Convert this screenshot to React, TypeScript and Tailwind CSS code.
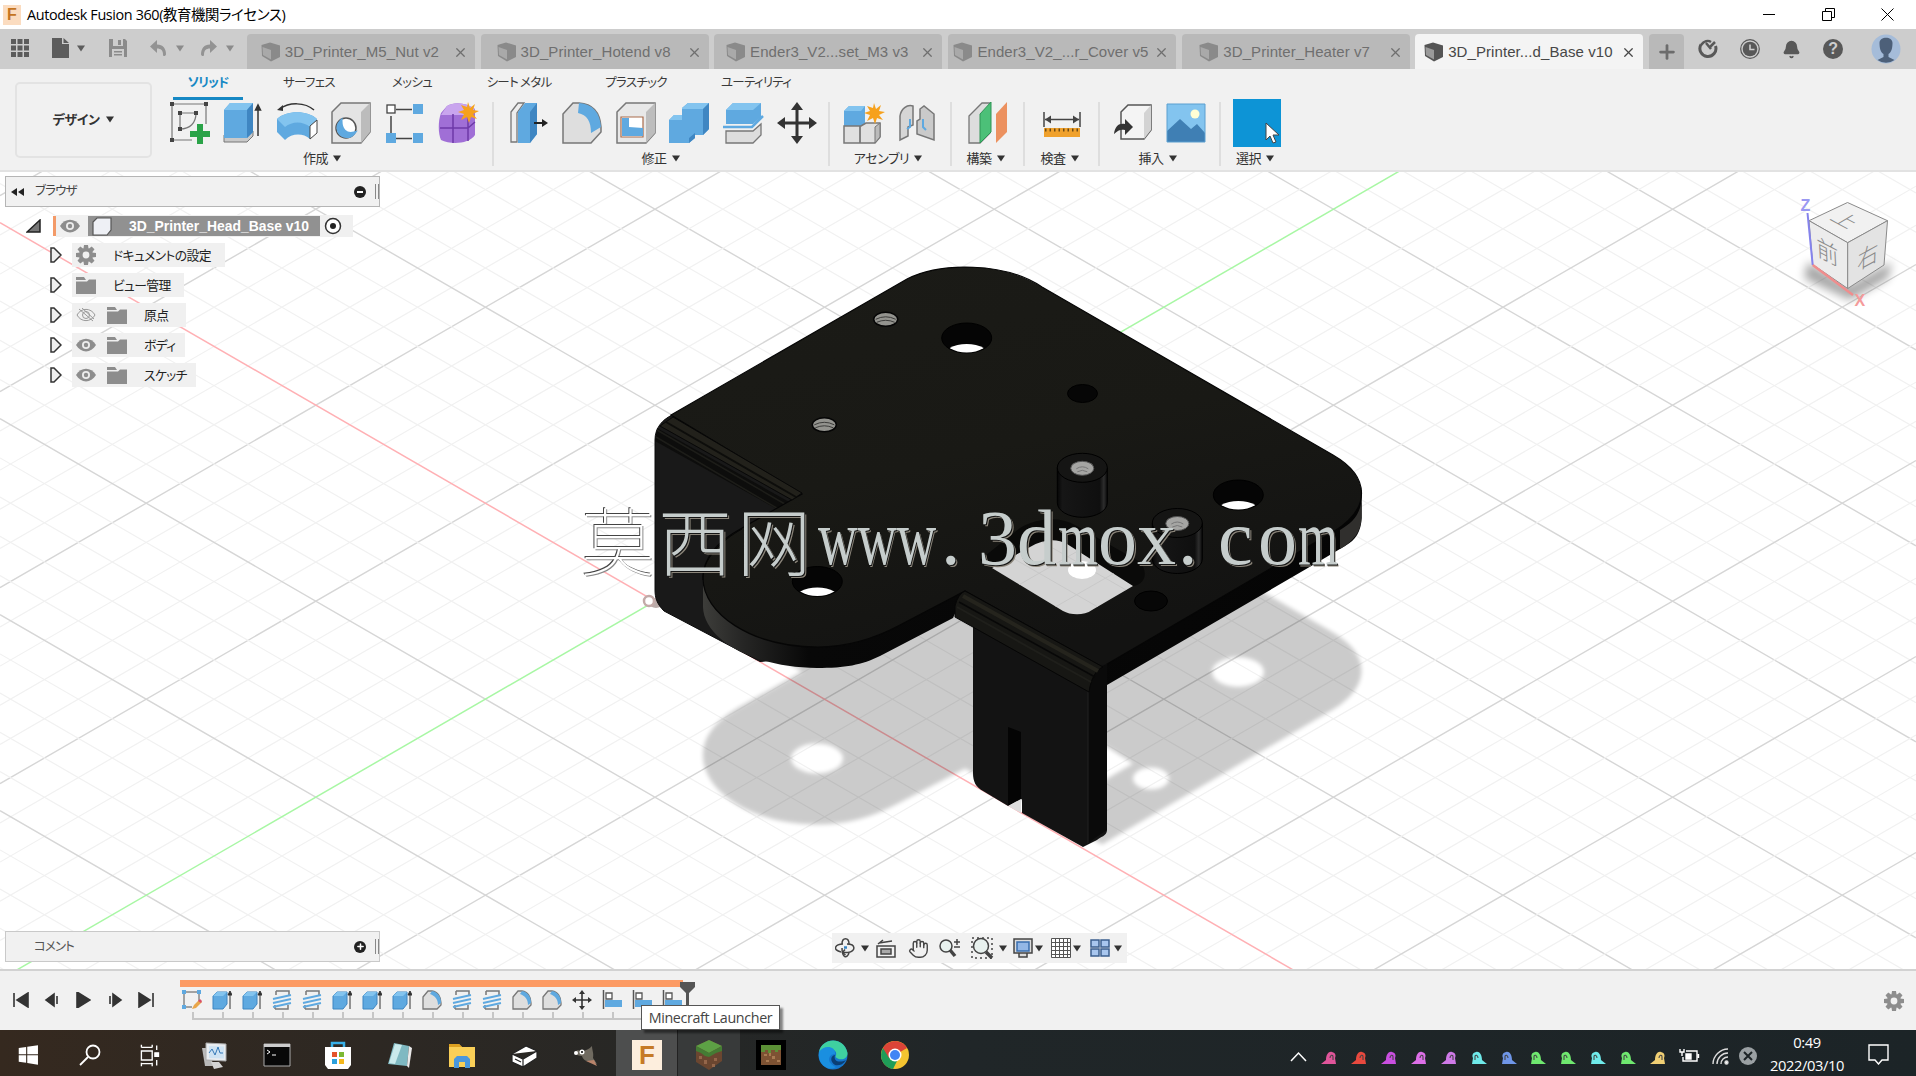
import type { ReactNode } from 'react';
import clsx from 'clsx';
import { Bell, Hand, X, Plus } from 'lucide-react';

const JP = "font-['Noto_Sans_CJK_JP',sans-serif] [font-feature-settings:'palt']";

function Caret({ className = 'text-[#333]' }: { className?: string }) {
  return (
    <svg width="8" height="7" viewBox="0 0 8 7" className={clsx('shrink-0', className)}>
      <path d="M0 0.5h8L4 6.5z" fill="currentColor" />
    </svg>
  );
}

function CubeIcon({ dim }: { dim?: boolean }) {
  return (
    <svg width="20" height="20" viewBox="0 0 20 20" className="shrink-0">
      <path d="M0.5 3 9 0.5 19 3.5V15L10 19.5 1 14z" fill={dim ? '#8a8a8a' : '#555'} />
      <path d="M1.5 5 10 8V17.5L2 13z" fill={dim ? '#a9a9a9' : '#9a9a9a'} />
    </svg>
  );
}

function Gear({ className }: { className?: string }) {
  return (
    <svg width="20" height="20" viewBox="0 0 20 20" className={clsx('shrink-0', className)}>
      <circle cx="10" cy="10" r="5.200" fill="none" stroke="#8d8d8d" strokeWidth="3.600" />
      {[0, 45, 90, 135, 180, 225, 270, 315].map((a) => (
        <path key={a} d="M8 0h4l.6 4H7.400z" fill="#8d8d8d" transform={`rotate(${a} 10 10)`} />
      ))}
    </svg>
  );
}

/* ---------- title bar ---------- */

function TitleBar() {
  return (
    <div className="h-[29px] shrink-0 flex items-center bg-white pl-[3px]">
      <div className="w-[18px] h-[20px] bg-[#fbdcc0] flex items-center justify-center text-[#c4741f] font-bold text-[16px] leading-none font-['Liberation_Sans',sans-serif]">
        F
      </div>
      <span className="ml-[6px] text-[14.4px] tracking-[-0.38px] text-black whitespace-nowrap font-['Open_Sans','Noto_Sans_CJK_JP',sans-serif] [font-feature-settings:'palt']">
        Autodesk Fusion 360(教育機関ライセンス)
      </span>
      <div className="ml-auto flex items-center gap-[46px] pr-[22px]">
        <svg width="13" height="13" viewBox="0 0 13 13"><path d="M0 6.5h12" stroke="#000" /></svg>
        <svg width="13" height="13" viewBox="0 0 13 13" fill="none" stroke="#000"><path d="M.5 3.5h9v9h-9zM3.5 3.500V.5h9v9h-3" /></svg>
        <svg width="13" height="13" viewBox="0 0 13 13" stroke="#000"><path d="M.5.5l12 12M12.500.5l-12 12" /></svg>
      </div>
    </div>
  );
}

/* ---------- document tabs ---------- */

const DOCS = [
  { name: '3D_Printer_M5_Nut v2' },
  { name: '3D_Printer_Hotend v8' },
  { name: 'Ender3_V2...set_M3 v3' },
  { name: 'Ender3_V2_...r_Cover v5' },
  { name: '3D_Printer_Heater v7' },
  { name: '3D_Printer...d_Base v10', active: true },
];

function TabBar() {
  return (
    <div className="h-[40px] shrink-0 flex bg-[#cdcdcd]">
      <div className="w-[247px] flex items-center pl-[11px] pb-[2px] text-[#5c5c5c]">
        <svg width="18" height="18" viewBox="0 0 18 18" fill="currentColor">
          {[0, 6.500, 13].map((x) => [0, 6.5, 13].map((y) => <rect key={`${x}-${y}`} x={x} y={y} width="5" height="5" />))}
        </svg>
        <svg width="17" height="20" viewBox="0 0 17 20" className="ml-[23px]"><path d="M0 0h10v6h7v14H0zM11.500 0 17 5h-5.500z" fill="currentColor" /></svg>
        <Caret className="ml-[8px] text-[#5c5c5c]" />
        <svg width="18" height="18" viewBox="0 0 18 18" className="ml-[24px] text-[#8b8b8b]">
          <path d="M0 0h16l2 2v16H0z" fill="currentColor" />
          <path d="M4 0h10v7H4zM3 10h12v8H3z" fill="#cdcdcd" />
          <path d="M9 1h3v5H9zM5 12h8v1.500H5zM5 15h8v1.500H5z" fill="currentColor" />
        </svg>
        <svg width="17" height="18" viewBox="0 0 17 18" className="ml-[23px] text-[#939393]"><path d="M7 1v4.500c6 0 9 4 9 10-1 2-3 2-3 0 0-4-2-6-6-6V14L0 7.500z" fill="currentColor" /></svg>
        <Caret className="ml-[9px] text-[#8b8b8b]" />
        <svg width="17" height="18" viewBox="0 0 17 18" className="ml-[16px] text-[#939393]"><path d="M10 1v4.500c-6 0-9 4-9 10 1 2 3 2 3 0 0-4 2-6 6-6V14l7-6.500z" fill="currentColor" /></svg>
        <Caret className="ml-[9px] text-[#8b8b8b]" />
      </div>
      <div className="flex gap-[5.700px] pt-[5px]">
        {DOCS.map((d) => (
          <div
            key={d.name}
            className={clsx(
              'w-[228px] flex items-center rounded-t-[4px] pr-[7px] pt-[1px]',
              d.active ? 'bg-[#f4f4f4] text-[#474747]' : 'bg-[#b9b9b9] text-[#6f6f6f]',
            )}
          >
            <div className="flex-1 flex items-center justify-center gap-[4px] whitespace-nowrap text-[15px] tracking-[0.08px] font-['Liberation_Sans',sans-serif]">
              <CubeIcon dim={!d.active} />
              <span>{d.name}</span>
            </div>
            <X size={15} strokeWidth={2} />
          </div>
        ))}
        <div className="w-[35px] flex items-center justify-center rounded-t-[4px] bg-[#b9b9b9] text-[#6c6c6c]">
          <Plus size={22} strokeWidth={3} />
        </div>
      </div>
      <div className="ml-auto w-[232px] flex items-center pl-[14px] text-[#585858]">
        <svg width="20" height="20" viewBox="0 0 20 20" fill="none" stroke="currentColor" strokeWidth="3">
          <path d="M3 5.500A8 8 0 1 0 17.500 7" /><path d="M3 6c3-4 7-5 10-3M8 4l5 6M11 9l6-6" strokeWidth="2.500" />
        </svg>
        <svg width="20" height="20" viewBox="0 0 20 20" className="ml-[22px]">
          <circle cx="10" cy="10" r="9.300" fill="none" stroke="currentColor" strokeWidth="1.200" />
          <circle cx="10" cy="10" r="7.300" fill="currentColor" />
          <path d="M10 5.500V10.500h4.500" stroke="#cdcdcd" strokeWidth="1.600" fill="none" />
        </svg>
        <Bell size={19} fill="currentColor" className="ml-[22px]" />
        <div className="ml-[22px] w-[20px] h-[20px] rounded-full bg-[#585858] text-[#cdcdcd] flex items-center justify-center text-[16px] font-bold font-['Liberation_Sans',sans-serif]">?</div>
        <svg width="30" height="30" viewBox="0 0 30 30" className="ml-[28px]">
          <circle cx="15" cy="15" r="14.500" fill="#a5bcd9" />
          <path d="M8.500 9c0-7 13-7 13 0 0 5-1 9-4 11v3l6 3a14.500 14.500 0 0 1-17 0l6-3v-3c-3-2-4-6-4-11z" fill="#4d6079" />
        </svg>
      </div>
    </div>
  );
}

/* ---------- ribbon icons (40x42) ---------- */

function Ico({ children }: { children: ReactNode }) {
  return <svg width="40" height="42" viewBox="0 0 40 42" className="shrink-0 overflow-visible">{children}</svg>;
}

const BLUE = '#5fa9e0';
const DBLUE = '#3f86c2';
const LBLUE = '#83c4ef';
const STAR = 'M10 0l2 6 5-4-2 6 6 1-6 3 4 5-6-2-2 6-2-6-6 3 3-6-6-2 6-2-3-5 6 2z';

const icons = {
  sketch: (
    <Ico>
      <g fill="none" stroke="#777" strokeWidth="1.200"><path d="M2 2h34v20M2 2v36h20" /><path d="M10 11h16c0 10-6 16-16 16z" /></g>
      <g fill="#444">{[[0, 0], [34, 0], [0, 36], [8, 9], [24, 9], [8, 25]].map(([x, y]) => <rect key={`${x}-${y}`} x={x} y={y} width="4" height="4" />)}</g>
      <path d="M27 22h6v7h7v6h-7v7h-6v-7h-7v-6h7z" fill="#2aa348" />
    </Ico>
  ),
  extrude: (
    <Ico>
      <path d="M1 33v7h23l6-6v-5z" fill="#c9c9c9" stroke="#777" />
      <path d="M1 8 7 1h23v29l-6 6H1z" fill={BLUE} /><path d="M1 8 7 1h23l-6 7z" fill={LBLUE} /><path d="M24 8l6-7v29l-6 6z" fill={DBLUE} />
      <path d="M35 34V4M32.500 8 35 3l2.500 5z" stroke="#333" strokeWidth="1.500" fill="#333" />
    </Ico>
  ),
  revolve: (
    <Ico>
      <path d="M3 7C12 0 28 0 37 8" fill="none" stroke="#333" strokeWidth="1.500" /><path d="M0 8l6-5v6z" fill="#333" />
      <path d="M0 17c9-9 31-9 40 0l-7 9v11c-7-6-18-6-25 1L0 30z" fill={BLUE} /><path d="M0 17c9-9 31-9 40 0l-7 8c-7-6-18-6-25 0z" fill={LBLUE} />
      <path d="M33 24l7-6v13l-7 6z" fill="#fff" stroke="#444" />
    </Ico>
  ),
  hole: (
    <Ico>
      <path d="M1 10 10 1h29v29l-9 11H1z" fill="#e4e4e4" stroke="#777" strokeWidth="1.500" /><path d="M30 10l9-9v29l-9 11z" fill="#bcbcbc" />
      <circle cx="15" cy="26" r="10" fill="#fff" stroke="#555" strokeWidth="1.500" /><path d="M10 19c0 9 5 14 13 12a9 9 0 0 1-15-1c-2-4-1-8 2-11z" fill={BLUE} stroke={BLUE} strokeWidth="3" />
    </Ico>
  ),
  pattern: (
    <Ico>
      <path d="M11 7.500h16M6 14v17M11 36.500h16" stroke="#444" strokeWidth="1.500" /><rect x="2" y="3" width="8" height="8" fill="#fff" stroke="#444" strokeWidth="1.300" />
      <g fill={BLUE}><rect x="28" y="2" width="10" height="10" /><rect x="1" y="31" width="10" height="10" /><rect x="28" y="31" width="10" height="10" /></g>
    </Ico>
  ),
  form: (
    <Ico>
      <path d="M9 4c8-5 20-3 28 3v26c-6 9-24 10-34 5-3-7-3-19 0-27z" fill="#a06fd6" /><path d="M9 4c8-5 20-3 28 3l-7 6H3z" fill="#c9a5ee" />
      <path d="M30 13v26M15 12v29M2 26h28l7-6" stroke="#6d3aa8" strokeWidth="1.500" fill="none" /><path d={STAR} fill="#f6a11c" transform="translate(20 0)" />
    </Ico>
  ),
  press: (
    <Ico>
      <path d="M3 10 10 1h6L9 11v29H3z" fill="#eee" stroke="#777" strokeWidth="1.300" />
      <path d="M10 10l7-9h12v31l-7 9H10z" fill={BLUE} /><path d="M22 10l7-9v31l-7 9z" fill={DBLUE} /><path d="M26 21h9" stroke="#222" strokeWidth="2" /><path d="M34 17l6 4-6 4z" fill="#222" />
    </Ico>
  ),
  fillet: (
    <Ico>
      <path d="M1 12 11 1h6c14 1 21 10 22 24v5L29 41H1z" fill="#dedede" stroke="#777" strokeWidth="1.500" />
      <path d="M17 1c14 1 21 10 22 24l-10 6c0-12-4-18-13-20z" fill={BLUE} />
    </Ico>
  ),
  shell: (
    <Ico>
      <path d="M1 10 10 1h29v30l-9 10H1z" fill="#e8e8e8" stroke="#777" strokeWidth="1.500" /><path d="M30 10l9-9v30l-9 10z" fill="#bdbdbd" />
      <path d="M5 15h22v20H5z" fill="#fff" stroke="#a86a4a" strokeWidth="1.200" /><path d="M6 16h7v9l14 1v8H6z" fill={BLUE} />
    </Ico>
  ),
  combine: (
    <Ico>
      <path d="M0 18l5-5h8V6l6-5h21v26l-6 6h-8v3l-6 5H0z" fill={BLUE} /><path d="M13 6l6-5h21l-6 6H13zM0 18l5-5h8v5z" fill={LBLUE} /><path d="M34 7l6-6v26l-6 6zM20 36l6-5v5l-6 5z" fill={DBLUE} />
    </Ico>
  ),
  split: (
    <Ico>
      <path d="M3 8l7-7h28v14l-8 7H3z" fill={BLUE} /><path d="M3 8l7-7h28l-8 7z" fill={LBLUE} /><path d="M0 25h29l11-11" fill="none" stroke={BLUE} strokeWidth="2.500" />
      <path d="M3 29h27l8-7v11l-8 8H3z" fill="#ddd" stroke="#777" strokeWidth="1.300" />
    </Ico>
  ),
  move: (
    <Ico><path d="M20 5v32M4 21h32" stroke="#333" strokeWidth="3" /><path d="M20 0l6 8H14zM20 42l-6-8h12zM0 21l8-6v12zM40 21l-8 6V15z" fill="#333" /></Ico>
  ),
  assembly: (
    <Ico>
      <path d="M1 9l5-5h16v20H1z" fill={BLUE} /><path d="M1 9l5-5h16l-4 5z" fill={LBLUE} />
      <path d="M1 24h16v17H1zM17 24h1l5-3h14v14l-5 6H17z" fill="#e0e0e0" stroke="#777" strokeWidth="1.500" /><path d="M17 24v17M32 25l5-4v14l-5 6z" fill="#bbb" stroke="#777" />
      <path d={STAR} fill="#f6a11c" transform="translate(21 1)" />
    </Ico>
  ),
  joint: (
    <Ico>
      <path d="M3 14C4 7 10 2 16 4v19l-5 2v9l-8 4z" fill="#d6d6d6" stroke="#777" strokeWidth="1.500" /><path d="M37 38V12L27 4l-4 3v10l-3 2v13z" fill="#cacaca" stroke="#777" strokeWidth="1.500" /><path d="M13 17v8l-3 2M26 17v8l3 3" stroke={BLUE} strokeWidth="2" fill="none" />
    </Ico>
  ),
  construct: (
    <Ico>
      <path d="M1 14 14 1h8v30L12 41H1z" fill="#ddd" stroke="#777" strokeWidth="1.300" /><path d="M12 12 23 0v30L12 41z" fill="#4cc078" stroke="#2f9455" /><path d="M28 12 39 0v30L28 41z" fill="#ec915f" />
    </Ico>
  ),
  measure: (
    <Ico><path d="M2 10v15M38 10v15M3 17.500h34" stroke="#444" strokeWidth="1.500" /><path d="M3 17.500l6-4v8zM37 17.500l-6-4v8z" fill="#444" /><path d="M2 26h36v9H2z" fill="#f0a12c" /><path d="M3 28h34" stroke="#6b4a14" strokeWidth="3" strokeDasharray="1.500 3" /></Ico>
  ),
  insert: (
    <Ico>
      <path d="M8 10l7-7h23v25l-7 9H8z" fill="#f4f4f4" stroke="#555" strokeWidth="1.500" /><path d="M31 11l7-8v25l-7 9z" fill="#d3d3d3" /><path d="M1 32c1-8 5-11 11-10v-5l8 8-8 8v-5c-4-1-7 0-11 4z" fill="#333" />
    </Ico>
  ),
  picture: (
    <Ico>
      <path d="M1 2h38v38H1z" fill={LBLUE} /><path d="M1 29 14 17l11 10 6-5 8 9v9H1z" fill="#3f7fb4" /><circle cx="29" cy="12" r="4.500" fill="#ffffd5" /><path d="M1 2h38v38H1z" fill="none" stroke="#5a9fd0" />
    </Ico>
  ),
  select: (
    <div className="w-[48px] h-[48px] bg-[#0d94d6] -my-[3px] flex items-end justify-end pb-[3px]">
      <svg width="16" height="22" viewBox="0 0 16 22"><path d="M1 1v17l4-4 3 7 3-1-3-7h6z" fill="#fff" stroke="#444" /></svg>
    </div>
  ),
};

type Group = { label: string; width: string; icons: (keyof typeof icons)[] };

const GROUPS: Group[] = [
  { label: '作成', width: 'w-[328px] pr-[10px]', icons: ['sketch', 'extrude', 'revolve', 'hole', 'pattern', 'form'] },
  { label: '修正', width: 'w-[336px] pl-[3px]', icons: ['press', 'fillet', 'shell', 'combine', 'split', 'move'] },
  { label: 'アセンブリ', width: 'w-[122px]', icons: ['assembly', 'joint'] },
  { label: '構築', width: 'w-[73px]', icons: ['construct'] },
  { label: '検査', width: 'w-[75px]', icons: ['measure'] },
  { label: '挿入', width: 'w-[121px]', icons: ['insert', 'picture'] },
  { label: '選択', width: 'w-[72px]', icons: ['select'] },
];

const RIBBON_TABS = [
  { label: 'ソリッド', cls: 'w-[70px]' },
  { label: 'サーフェス', cls: 'w-[60px] ml-[36px]' },
  { label: 'メッシュ', cls: 'w-[50px] ml-[48px]' },
  { label: 'シート メタル', cls: 'w-[80px] ml-[42px]' },
  { label: 'プラスチック', cls: 'w-[70px] ml-[42px]' },
  { label: 'ユーティリティ', cls: 'w-[80px] ml-[45px]' },
];

function Ribbon() {
  return (
    <div className="h-[103px] shrink-0 flex bg-[#f1f1f1] border-b-2 border-[#e2e2e2]">
      <div className={clsx('ml-[15px] mt-[13px] w-[137px] h-[76px] rounded-[5px] border-2 border-[#e3e3e3] flex items-center justify-center gap-[7px] pb-[2px] text-[13px] font-bold text-[#333] tracking-[-0.5px]', JP)}>
        デザイン <Caret />
      </div>
      <div className="ml-[14px] flex flex-col">
        <div className="flex h-[31px] pl-[7px]">
          {RIBBON_TABS.map((t, i) => (
            <div
              key={t.label}
              className={clsx(
                'flex justify-center pt-[3px] text-[12.500px] leading-[19px] whitespace-nowrap tracking-[-0.7px] border-b-[3px]',
                JP,
                t.cls,
                i === 0 ? 'font-bold text-[#1688c4] border-[#1688c4]' : 'text-[#3a3a3a] border-transparent',
              )}
            >
              {t.label}
            </div>
          ))}
        </div>
        <div className="flex pt-[2px]">
          {GROUPS.map((g, i) => (
            <div key={g.label} className={clsx('h-[64px] flex flex-col items-center', g.width, i < 6 && 'border-r-2 border-[#dedede]')}>
              <div className="flex gap-[13.700px]">
                {g.icons.map((n) => <div key={n}>{icons[n]}</div>)}
              </div>
              <div className={clsx('mt-[4px] -ml-[4px] flex items-center gap-[5px] text-[13px] leading-[20px] text-[#333] tracking-[-0.4px] whitespace-nowrap', JP)}>
                {g.label} <Caret />
              </div>
            </div>
          ))}
        </div>
      </div>
    </div>
  );
}

/* ---------- viewport ---------- */

const OX = 655;
const OY = 601.2;
const SLOPE = 98 / 169.6;

function Grid() {
  const lines: ReactNode[] = [];
  for (let k = -32; k <= 32; k++) {
    if (k === 0) continue;
    const major = k % 5 === 0;
    const c = OY + k * 39.2;
    const stroke = major ? '#d6d6d6' : '#f1f1f1';
    lines.push(<path key={k} d={`M0 ${c - SLOPE * OX}L1916 ${c + SLOPE * (1916 - OX)}M0 ${c + SLOPE * OX}L1916 ${c - SLOPE * (1916 - OX)}`} stroke={stroke} strokeWidth={major ? 1.4 : 1.2} />);
  }
  return (
    <g>
      {lines}
      <path d={`M0 ${OY - SLOPE * OX}L1916 ${OY + SLOPE * (1916 - OX)}`} stroke="#ffb0b4" strokeWidth="1.500" />
      <path d={`M0 ${OY + SLOPE * OX}L1916 ${OY - SLOPE * (1916 - OX)}`} stroke="#a8f7a4" strokeWidth="1.500" />
    </g>
  );
}

const PLATE = 'M671 415L907 279C940 262 1005 262 1042 287L1333 455C1371 477 1371 509 1333 532L1102 667L965 591L900 625C870 641 845 647 818 647C750 647 703 613 703 578C703 556 720 540 742 528L802 494Z';
const WINDOW = 'M992 568L1030 547C1043 539 1057 538 1067 544L1133 586L1092 610C1084 616 1070 615 1063 611Z';

const ell = (x: number, y: number, rx: number, ry: number) => `M${x - rx} ${y}a${rx} ${ry} 0 1 0 ${rx * 2} 0a${rx} ${ry} 0 1 0 ${-rx * 2} 0Z`;

function ThroughHole({ x, y }: { x: number; y: number }) {
  const id = `hole-${x}`;
  return (
    <g>
      <clipPath id={id}><ellipse cx={x} cy={y} rx="23.500" ry="14.500" /></clipPath>
      <ellipse cx={x} cy={y} rx="25" ry="15" fill="#050505" stroke="#000" />
      <ellipse cx={x} cy={y + 20} rx="24" ry="14" fill="#fff" clipPath={`url(#${id})`} />
    </g>
  );
}

function Thread({ x, y }: { x: number; y: number }) {
  return (
    <g>
      <ellipse cx={x} cy={y} rx="12" ry="7" fill="#93938e" stroke="#050505" strokeWidth="1.500" />
      <path d={`M${x - 10} ${y}q10 -5 20 0M${x - 9} ${y + 3}q9 -4 18 0`} stroke="#3c3c3a" fill="none" />
    </g>
  );
}

function Post({ x, y, h }: { x: number; y: number; h: number }) {
  return (
    <g>
      <path d={`M${x - 25} ${y}v${h}a25 14.500 0 0 0 50 0v${-h}z`} fill="url(#post)" stroke="#000" />
      <ellipse cx={x} cy={y} rx="25" ry="14.500" fill="#151514" stroke="#000" />
      <ellipse cx={x} cy={y + 0.500} rx="11.500" ry="7" fill="#a5a5a3" stroke="#555" />
      <path d={`M${x - 6} ${y + 1}q6 -4 12 0M${x - 5} ${y + 4}q5 -3 10 0`} stroke="#777" fill="none" />
    </g>
  );
}

function Bracket() {
  return (
    <g>
      <defs>
        <filter id="soft" x="-5%" y="-5%" width="110%" height="110%"><feGaussianBlur stdDeviation="2.200" /></filter>
        <filter id="softer" x="-30%" y="-30%" width="160%" height="160%"><feGaussianBlur stdDeviation="5" /></filter>
        <linearGradient id="top" x1="0" y1="0" x2="0.4" y2="1"><stop offset="0" stopColor="#1b1b17" /><stop offset="0.55" stopColor="#191915" /><stop offset="1" stopColor="#131312" /></linearGradient>
        <linearGradient id="post"><stop offset="0" stopColor="#060606" /><stop offset="0.1" stopColor="#161616" /><stop offset="0.85" stopColor="#0f0f0f" /><stop offset="0.93" stopColor="#2d2d2d" /><stop offset="1" stopColor="#0a0a0a" /></linearGradient>
        <linearGradient id="rim"><stop offset="0" stopColor="#3d3d3a" /><stop offset="0.06" stopColor="#262625" /><stop offset="0.16" stopColor="#080808" /><stop offset="1" stopColor="#050505" /></linearGradient>
      </defs>

      {/* ground shadow */}
      <g transform="translate(0 177.500)" filter="url(#soft)" opacity="0.2">
        <path fillRule="evenodd" d={`${PLATE}${WINDOW}${ell(817, 581, 26, 15)}${ell(1238, 494.5, 26, 15)}${ell(1151, 601, 18, 11)}${ell(1082, 393, 16, 11)}`} fill="#000" />
      </g>

      {/* origin marker */}
      <ellipse cx="656" cy="603" rx="7" ry="5" fill="#b9aaa8" />
      <circle cx="649" cy="601" r="5" fill="#fff" stroke="#c3aaa8" strokeWidth="2.500" />

      {/* left flange */}
      <path d="M655 440C655 428 662 420 672 415L830 500V655L760 661.500L664 611C657 604 655 598 655 590Z" fill="#191919" stroke="#0a0a0a" />
      <path d="M657 428L800 508L784 513L655 441z" fill="#0d0d0c" />
      <path d="M657 430L790 507M656 437L780 510" stroke="#1d1d19" strokeWidth="1.500" />

      {/* thickness of the plate */}
      <path d="M703 578V607C704 640 755 668 817 668C845 668 862 665 880 656L953 618L965 591L1102 667L1107 685L1313 565L1345 546C1356 540 1361 531 1361.700 518V490Z" fill="url(#rim)" />
      <path d="M1361.500 500C1360 515 1352 523 1340 530V549C1354 541 1361 531 1361.500 518z" fill="#302f2d" />

      {/* top face */}
      <path fillRule="evenodd" d={PLATE} fill="url(#top)" stroke="#060606" strokeWidth="1.200" />
      <path d="M673 417L802 493L792 500L660 426z" fill="#22211b" stroke="#080808" />
      <path d="M666 422L796 497" stroke="#0d0d0b" strokeWidth="2" />
      <path d="M703 580C701 560 722 540 742 529" fill="none" stroke="#050505" />

      {/* window */}
      <path d="M980 560L1020 528C1040 517 1060 517 1075 525L1140 562C1148 572 1146 584 1133 586L992 568Z" fill="#0a0a09" />
      <path d={WINDOW} fill="#d4d4d4" />
      <clipPath id="win"><path d={WINDOW} /></clipPath>
      <g clipPath="url(#win)">
        <path d="M990 545L1110 614M1030 535L1140 598M1010 590L1090 544M1050 610L1130 564" stroke="#c8c8c8" />
        <ellipse cx="1082" cy="570" rx="14" ry="9" fill="#fff" />
      </g>

      {/* front leg */}
      <path d="M973 620L1095 665L1107 664V830C1107 836 1100 837 1097 840L1083 847L1022 813V799L1008 806L983 791C976 787 973 782 973 773Z" fill="#131313" />
      <path d="M1088 690L1096 668L1107 664V830L1095 838L1088 844z" fill="#0a0a0a" />
      <path d="M1088 690V843" stroke="#222" />
      <path d="M1008 727L1021 732V799L1008 806z" fill="#040404" />
      <path d="M1008 806L1021 799V813z" fill="#ddd" />
      <path d="M965 591L1103 667C1096 670 1091 678 1089 692L955 617L955 606Q958 594 965 591Z" fill="#171714" stroke="#060606" />
      <path d="M963 596L1098 671" stroke="#25241d" strokeWidth="4" />
      <path d="M957 607L1091 682" stroke="#1f1f1b" strokeWidth="2" />
      <path d="M959 602L1095 677" stroke="#080808" strokeWidth="1.500" />

      <ThroughHole x={966.700} y={338} />
      <ThroughHole x={817.300} y={581.500} />
      <ThroughHole x={1238.300} y={495} />
      <ellipse cx="1082.500" cy="393.500" rx="15" ry="9" fill="#060606" stroke="#000" />
      <ellipse cx="1151" cy="601" rx="16.500" ry="10" fill="#070707" stroke="#000" />
      <Thread x={885.700} y={319.300} />
      <Thread x={824.300} y={424.800} />
      <Post x={1082.300} y={467.800} h={35} />
      <Post x={1177.300} y={523} h={36} />
    </g>
  );
}

function ViewCube() {
  return (
    <g fontFamily="'Noto Sans CJK JP', sans-serif">
      <path d="M1808 262L1848 286L1892 262L1888 278L1850 300L1804 278z" fill="#000" opacity="0.35" filter="url(#softer)" />
      <g stroke="#8a8a8a" strokeWidth="1">
        <path d="M1847.500 202.500L1887.500 220.700L1847.700 242.700L1809 220.700z" fill="#f1f1f1" />
        <path d="M1809 220.700L1847.700 242.700V288.500L1812.700 264.500z" fill="#ececec" />
        <path d="M1887.500 220.700L1847.700 242.700V288.500L1884 265z" fill="#e3e3e3" />
      </g>
      <path d="M1807.500 213L1812.700 265" stroke="#8583ec" strokeWidth="2" />
      <path d="M1812.700 265L1853 295" stroke="#f08d8d" strokeWidth="2.500" />
      <g fill="#8b8b8b" fontWeight="300">
        <text transform="matrix(.78 .42 -.72 .42 1844 217)" x="-8" y="12" fontSize="25">上</text>
        <text transform="matrix(.88 .46 .05 .96 1817 255)" fontSize="25">前</text>
        <text transform="matrix(.84 -.46 -.04 .96 1857 271)" fontSize="25">右</text>
      </g>
      <g fontFamily="'Liberation Sans', sans-serif" fontWeight="bold" fontSize="16">
        <text x="1800.500" y="211" fill="#9a98f2">Z</text>
        <text x="1854.500" y="306" fill="#f59a9a">X</text>
      </g>
    </g>
  );
}

function Watermark() {
  return (
    <div className="absolute left-[581px] top-[316px] h-[100px] flex items-center text-[#c6cdcc] text-[78px] leading-[100px] whitespace-nowrap [text-shadow:1px_1px_0_#151515,2px_2px_0_#8b857a]">
      <span className="w-[77px] text-[74px] text-white font-thin font-['Noto_Sans_CJK_SC',sans-serif] [text-shadow:-1px_-1px_0_#444,1px_1px_0_#888]">莫</span>
      <span className="w-[160px] text-[74px] font-light tracking-[5px] font-['Noto_Sans_CJK_SC',sans-serif]">西网</span>
      <div className="flex font-['Liberation_Serif',serif]">
        <span className="w-[120px]"><span className="inline-block origin-left scale-x-[.7]">www</span></span>
        <span className="w-[40px] pl-[3px]">.</span>
        <span className="w-[80px]">3d</span>
        <span className="w-[40px]"><span className="inline-block origin-left scale-x-[.66]">m</span></span>
        <span className="w-[80px]">ox</span>
        <span className="w-[40px]">.</span>
        <span className="w-[40px]">c</span>
        <span className="w-[40px]">o</span>
        <span className="w-[40px]"><span className="inline-block origin-left scale-x-[.66]">m</span></span>
      </div>
    </div>
  );
}

function Folder() {
  return <svg width="20" height="17" viewBox="0 0 20 17"><path d="M0 0h8l2 3H0zM0 4.500h11l2-2h7V17H0z" fill="#8d8d8d" /></svg>;
}

function Expander() {
  return <svg width="12" height="16" viewBox="0 0 12 16"><path d="M1 1l3 0 7 7-7 7H1z" fill="#eee" stroke="#333" strokeWidth="1.500" /></svg>;
}

function EyeGlyph({ hidden }: { hidden?: boolean }) {
  if (hidden) {
    return (
      <svg width="20" height="14" viewBox="0 0 20 14" fill="none" stroke="#999">
        <path d="M1 7C5-.5 15-.5 19 7 15 14.500 5 14.500 1 7z" /><circle cx="10" cy="7" r="3.500" /><path d="M3 1l14 12M6 0l12 11" />
      </svg>
    );
  }
  return <svg width="20" height="14" viewBox="0 0 20 14"><path d="M0 7C5-1.500 15-1.500 20 7 15 15.500 5 15.500 0 7z" fill="#8d8d8d" /><circle cx="10" cy="7" r="4" fill="#ececec" /><circle cx="10" cy="7" r="2.200" fill="#8d8d8d" /></svg>;
}

const TREE = [
  { label: 'ドキュメントの設定', icon: 'gear', width: 'w-[153px]' },
  { label: 'ビュー管理', icon: 'folder', width: 'w-[112px]' },
  { label: '原点', icon: 'hidden', width: 'w-[114px]' },
  { label: 'ボディ', icon: 'eye', width: 'w-[113px]' },
  { label: 'スケッチ', icon: 'eye', width: 'w-[124px]' },
];

function BrowserPanel() {
  return (
    <div className="absolute left-[5px] top-[4px] w-[375px]">
      <div className="h-[31px] flex items-center border border-[#b5b5b5] bg-[#f1f1f1] pl-[5px]">
        <svg width="13" height="8" viewBox="0 0 13 8"><path d="M6 0v8L0 4zM13 0v8L7 4z" fill="#222" /></svg>
        <span className={clsx('ml-[11px] -mt-[2px] text-[12.500px] text-[#444] tracking-[-0.8px]', JP)}>ブラウザ</span>
        <div className="ml-auto mr-[9px] w-[12px] h-[12px] rounded-full bg-[#222] flex items-center justify-center"><div className="w-[6px] h-[2px] bg-white" /></div>
        <div className="w-[4px] h-[15px] border-l border-r border-[#888]" />
      </div>
      <div className="mt-[9px] h-[20px] flex items-center">
        <svg width="15" height="14" viewBox="0 0 15 14" className="ml-[21px]"><path d="M14 1v12H1z" fill="#777" stroke="#222" strokeWidth="1.500" /></svg>
        <div className="ml-[12px] w-[3px] h-full bg-[#f39a68]" />
        <div className="h-[22px] w-[297px] bg-[#f0f0f0] flex items-center pl-[4px]">
          <EyeGlyph />
          <div className="ml-[8px] h-[20px] w-[232px] bg-[#919191] flex items-center pl-[4px]">
            <svg width="20" height="19" viewBox="0 0 20 19"><path d="M1 5l4-4h14v12l-4 5H1z" fill="#eef0f5" stroke="#555" strokeWidth="1.200" /></svg>
            <span className="ml-[17px] text-[13.900px] font-bold text-white whitespace-nowrap font-['Liberation_Sans',sans-serif]">3D_Printer_Head_Base v10</span>
          </div>
          <svg width="18" height="18" viewBox="0 0 18 18" className="ml-[4px]"><circle cx="9" cy="9" r="7.500" fill="#fff" stroke="#333" strokeWidth="1.500" /><circle cx="9" cy="9" r="3" fill="#222" /></svg>
        </div>
      </div>
      <div className="mt-[7px] flex flex-col gap-[6px] pl-[45px]">
        {TREE.map((n) => (
          <div key={n.label} className="h-[24px] flex items-center gap-[10px]">
            <Expander />
            <div className={clsx('h-full flex items-center bg-[#f0f0f0] pl-[4px]', n.width)}>
              {n.icon === 'gear' && <Gear />}
              {n.icon === 'hidden' && <EyeGlyph hidden />}
              {n.icon === 'eye' && <EyeGlyph />}
              {n.icon !== 'gear' && <div className={n.icon === 'folder' ? '' : 'ml-[11px]'}><Folder /></div>}
              <span className={clsx('ml-[17px] text-[12.800px] text-[#222] tracking-[-0.6px] whitespace-nowrap', JP)}>{n.label}</span>
            </div>
          </div>
        ))}
      </div>
    </div>
  );
}

function NavBar() {
  const s = { fill: 'none', stroke: '#444', strokeWidth: 1.5 };
  return (
    <div className="absolute left-[832px] top-[761px] w-[295px] h-[30px] bg-[#f1f1f1] flex items-center pl-[3px]">
      <svg width="20" height="20" viewBox="0 0 20 20" {...s}><path d="M6 14C-3 12 0 6 8 6M12 6c9 0 9 7 1 8.500l-5 0" /><path d="M7 6c0-7 7-7 7 0M7 10c0 10 5 11 7 5" /><path d="M10 11.500L7.500 14.500l3 2.500" /><path d="M9 9.500h3" stroke="#3784c4" strokeWidth="2.500" /></svg>
      <Caret className="ml-[6px] text-[#333]" />
      <svg width="20" height="20" viewBox="0 0 20 20" className="ml-[7px]" {...s}><path d="M1 8h18v11H1z" /><path d="M5 11h10v5H5z" fill="#aaa" /><path d="M2 6l5-4M3 5l13-2" /></svg>
      <Hand size={21} strokeWidth={1.600} className="ml-[12px] text-[#444]" />
      <svg width="21" height="20" viewBox="0 0 21 20" className="ml-[10px]" {...s}><circle cx="7" cy="8" r="6" fill="#e8f1ee" /><path d="M11 12l5 6" strokeWidth="3.500" /><path d="M15 4h6M18 1v6M15 9h6" /></svg>
      <svg width="23" height="22" viewBox="0 0 23 22" className="ml-[11px]" {...s}><path d="M1 1h20v20H1z" strokeDasharray="2 3" /><circle cx="10" cy="9" r="7.500" fill="#e8f1ee" /><path d="M15 15l6 6" strokeWidth="3.500" /></svg>
      <Caret className="ml-[5px] text-[#333]" />
      <svg width="20" height="20" viewBox="0 0 20 20" className="ml-[6px]" {...s}><path d="M1 1h18v14H1zM6 15h8v4H6z" fill="#ddd" /><path d="M4 4h12v9H4z" fill="#93b7e6" stroke="#3a6fb0" /></svg>
      <Caret className="ml-[2px] text-[#333]" />
      <svg width="20" height="20" viewBox="0 0 20 20" className="ml-[8px]" stroke="#555" fill="#fff"><path d="M.5.5h19v19H.5zM4.500 0v20M8.500 0v20M12.500 0v20M16.500 0v20M0 4.500h20M0 8.500h20M0 12.500h20M0 16.500h20" /></svg>
      <Caret className="ml-[2px] text-[#333]" />
      <svg width="20" height="18" viewBox="0 0 20 18" className="ml-[9px]" stroke="#3b5f8f" fill="#a8c6ee" strokeWidth="1.500"><path d="M1 1h8v7H1zM11 1h8v7h-8zM1 10h8v7H1zM11 10h8v7h-8z" /></svg>
      <Caret className="ml-[4px] text-[#333]" />
    </div>
  );
}

function Viewport() {
  return (
    <div className="relative h-[797px] shrink-0 overflow-hidden bg-white">
      <svg width="1916" height="797" viewBox="0 172 1916 797" className="block">
        <Grid />
        <Bracket />
        <ViewCube />
      </svg>
      <Watermark />
      <BrowserPanel />
      <div className="absolute left-[5px] top-[759px] w-[375px] h-[31px] flex items-center border border-[#c9c9c9] bg-[#f1f1f1] pl-[28px]">
        <span className={clsx('-mt-[1px] text-[12.500px] text-[#555] tracking-[-0.9px]', JP)}>コメント</span>
        <div className="ml-auto mr-[9px] w-[12px] h-[12px] rounded-full bg-[#222] flex items-center justify-center text-white"><Plus size={9} strokeWidth={4} /></div>
        <div className="w-[4px] h-[15px] border-l border-r border-[#888]" />
      </div>
      <NavBar />
    </div>
  );
}

/* ---------- timeline ---------- */

const T = {
  s: <><path d="M2 2h15v11M2 2v15h8" fill="none" stroke="#555" /><path d="M0 0h4v4H0zM15 0h4v4h-4zM0 15h4v4H0z" fill={BLUE} /><path d="M10 19l2-4 5-5 3 2-6 6z" fill="#e9a64a" /><path d="M16 11l2-2 2 2-1 2z" fill="#d8506a" /></>,
  e: <><path d="M1 6l4-4h10v12l-4 5H1z" fill={BLUE} stroke={DBLUE} /><path d="M1 6l4-4h10l-4 4z" fill={LBLUE} /><path d="M18 19V3M16 5l2-4 2 4z" stroke="#333" fill="#333" /></>,
  h: <><path d="M4 1h13v4M3 19h13v-4M4 1v4M3 19v-4" fill="none" stroke="#777" strokeWidth="1.500" /><path d="M1 9l18-4M1 13l18-4M1 17l18-4" stroke={BLUE} strokeWidth="2" /></>,
  f: <><path d="M1 7l5-6h4c6 1 9 6 9 12v2l-4 4H1z" fill="#dedede" stroke="#777" strokeWidth="1.300" /><path d="M10 1c6 1 9 6 9 12l-3 2c0-6-3-9-8-11z" fill={BLUE} /></>,
  m: <><path d="M10 3v14M3 10h14" stroke="#333" strokeWidth="1.600" /><path d="M10 0l3 4H7zM10 20l-3-4h6zM0 10l4-3v6zM20 10l-4 3V7z" fill="#333" /></>,
  a: <><path d="M1.500 0v19" stroke="#555" strokeWidth="1.500" /><path d="M4 3h6v6H4z" fill="#fff" stroke="#555" strokeWidth="1.300" /><path d="M3 10h17v7H3z" fill={BLUE} /></>,
};

const STEPS = 'seehheeefhhffmaaa'.split('') as (keyof typeof T)[];

function Timeline() {
  return (
    <div className="relative h-[61px] shrink-0 flex bg-[#f1f1f1] border-t-2 border-[#d2d2d2]">
      <div className="w-[180px] flex items-center gap-[15.200px] pl-[13px] pb-[1px] text-[#333]">
        {['M1 1v14M15 1v14L4 8z', 'M10 2v12L2 8zM13 4v8', 'M2 0v16l13-8z', 'M6 2v12l8-6zM3 4v8', 'M15 1v14M1 1v14l11-7z'].map((d) => (
          <svg key={d} width="16" height="16" viewBox="0 0 16 16"><path d={d} fill="currentColor" stroke="currentColor" strokeWidth="1.600" /></svg>
        ))}
      </div>
      <div className="pt-[9px] w-[512px]">
        <div className="h-[7px] w-[503px] bg-[#fc9a63]" />
        <div className="flex gap-[10px] pl-[2px] pt-[3px]">
          {STEPS.map((s, i) => <svg key={i} width="20" height="20" viewBox="0 0 20 20" className="shrink-0">{T[s]}</svg>)}
        </div>
        <div className="ml-[12px] mt-[2px] h-[8px] w-[482px] flex border-b-2 border-[#c6c6c6]">
          {STEPS.map((_, i) => <div key={i} className="w-[30px] shrink-0 border-l-2 border-[#c6c6c6]" />)}
        </div>
      </div>
      <svg width="17" height="34" viewBox="0 0 17 34" className="absolute left-[679px] top-[11px]"><path d="M1 0h15v5l-6 6v23H7V11L1 5z" fill="#555" /></svg>
      <Gear className="ml-auto mr-[12px] mt-[20px]" />
      <div className="absolute z-10 left-[641px] top-[34px] w-[139px] h-[25px] border border-[#555] bg-white flex items-center justify-center text-[14.300px] tracking-[-0.35px] text-[#444] whitespace-nowrap shadow-[3px_3px_2px_rgba(0,0,0,0.45)] font-['Open_Sans',sans-serif]">
        Minecraft Launcher
      </div>
    </div>
  );
}

/* ---------- taskbar ---------- */

const APPS: ReactNode[] = [
  <path d="M1 5l10-1.500V14H1zM12.500 3.300 27 1v13H12.500zM1 15.500h10V26L1 24.500zM12.500 15.500H27V29l-14.500-2.500z" fill="#fff" transform="translate(3 4.500) scale(.74 .7)" />,
  <g fill="none" stroke="#fff" strokeWidth="1.800"><circle cx="16" cy="12" r="6.500" /><path d="M11 17l-8 8" /></g>,
  <g fill="none" stroke="#fff" strokeWidth="1.500" transform="translate(-3 2) scale(.9)"><path d="M6 10h12v10H6zM6 6V3M18 6V3M6 23v4M18 23v4M6 6h12M6 24h12M23 4v5M23 20v6" /><path d="M21 12h4v4h-4z" fill="#fff" /></g>,
  <g><path d="M1 8h8l3 18H4z" fill="#b9b9b9" /><path d="M5 3l20 1v17l-20-1z" fill="#e9edf1" stroke="#aaa" /><path d="M8 6l15 .5v12L8 18z" fill="#cfe3f3" /><path d="M8 13l3-4 3 6 3-8 2 6h3" stroke="#3579b8" fill="none" /><path d="M10 22l8 0 4 5-9 2z" fill="#d4d4d4" /></g>,
  <g><path d="M1 4h26v22H1z" fill="#080808" stroke="#aaa" /><path d="M1 4h26v3H1z" fill="#ccc" /><path d="M4 10l3 2-3 2M9 15h4" stroke="#fff" fill="none" /></g>,
  <g><path d="M8 7V3h12v4" stroke="#38b0e8" strokeWidth="2.500" fill="none" /><path d="M1 7h26v18l-3 4H4l-3-4z" fill="#fff" /><path d="M8 12h5v5H8z" fill="#e5532b" /><path d="M15 12h5v5h-5z" fill="#7db933" /><path d="M8 19h5v5H8z" fill="#2ba0dc" /><path d="M15 19h5v5h-5z" fill="#f5b81c" /></g>,
  <g><path d="M8 3l15 3-2 20L2 24z" fill="#7fb9c2" /><path d="M9 4l7 1-7 19-6-1z" fill="#c9eaec" /><path d="M23 6l3 2-3 20-2-2z" fill="#e9e9e9" /></g>,
  <g><path d="M1 4h10l3 3h13v20H1z" fill="#f9cf57" /><path d="M1 4h10l3 3H1z" fill="#dca021" /><path d="M6 28v-9l3-3h10l3 3v9h-5v-6h-6v6z" fill="#4a97dd" /></g>,
  <path d="M2 14l14-8 11 5v7l-14 9-11-5zM2 14l11 5 14-8M13 19v8M5 19l6 3" fill="#fff" stroke="#222" strokeWidth="1.200" />,
  <g><path d="M3 12c3-4 6 0 8-1 4-1 6-2 9-5 0 4 2 7 1 12l4 6-6-3c-6 1-8-2-9-5-3 0-6-1-7-4z" fill="#6f6a60" /><circle cx="4" cy="13" r="2" fill="#fff" /><circle cx="10" cy="12" r="2.500" fill="#fff" /><circle cx="10" cy="12" r="1" /><path d="M14 21l8-1 3 6z" fill="#b9846b" /></g>,
  null,
  <g><path d="M14 0l13 6v15l-13 9L1 22V6z" fill="#6b4630" /><path d="M14 0l13 6-13 7L1 6z" fill="#5da145" /><path d="M1 6l13 7v4l-4-1-4-3-5-2zM27 6v5l-6 2-7 4v-4z" fill="#447c34" /><path d="M4 16h3v3H4zM9 20h3v4H9zM19 18h3v3h-3zM17 24h3v3h-3z" fill="#94664a" /></g>,
  <g><path d="M-1 0h30v30H-1z" fill="#000" /><path d="M4 5h20v20H4z" fill="#7d5233" /><path d="M4 5h20v5h-3v2h-3v-2h-4v3h-3v-3H8v2H4z" fill="#5c9036" /><path d="M7 14h3v2H7zM15 16h3v3h-3zM9 20h3v2H9zM20 20h3v2h-3zM12 13h2v3h-2z" fill="#a87a52" /></g>,
  <g><circle cx="14" cy="15" r="14.500" fill="#1577cf" /><path d="M0 12C3-3 25-4 28.500 13c0 7-8 8-12 4 4-8-8-11-16.500-5z" fill="#3fd0a0" /><path d="M0 12c5-8 17-6 16 2-7 0-9 9 1 13-8 5-19-3-17-15z" fill="#1a8fe0" /><path d="M16 15c-2 7 5 8 11 5-3 5-8 6-11 5-5-3-5-9 0-10z" fill="#0b3f75" /></g>,
  <g><circle cx="14" cy="15" r="14" fill="#f4c430" /><path d="M14 15L2 8a14 14 0 0 1 24 0z" fill="#dc4437" /><path d="M14 15L2 8a14 14 0 0 0 10 21l6-12z" fill="#1f9d58" /><path d="M14 8h12a14 14 0 0 0-24 0l6 10z" fill="#dc4437" /><circle cx="14" cy="15" r="6.500" fill="#fff" /><circle cx="14" cy="15" r="5" fill="#4285f4" /></g>,
];

const BIRDS = ['#e0559a', '#e8493e', '#c94fe0', '#dd6fe8', '#cf7ae8', '#6feaea', '#6f96e8', '#6fe86f', '#6fe86f', '#6feaea', '#6fe86f', '#f0cf74'];

function Taskbar() {
  return (
    <div className="h-[46px] shrink-0 flex bg-linear-to-r from-[#35291f] via-[#202628] to-[#1c2427]">
      {APPS.map((icon, i) => (
        <div
          key={i}
          className={clsx('w-[61.800px] h-full shrink-0 flex items-center justify-center pt-[4px] first:-ml-[1.500px]', i === 10 && 'bg-[#4d4e4e] border-r border-[#222]', i === 11 && 'bg-[#383a3a]')}
        >
          {i === 10 ? (
            <div className="w-[30px] h-[30px] bg-[#fdeedd] flex items-center justify-center text-[#c67a25] font-bold text-[26px] leading-none font-['Liberation_Sans',sans-serif]">F</div>
          ) : (
            <svg width="28" height="30" viewBox="0 0 28 30" className="overflow-visible">{icon}</svg>
          )}
        </div>
      ))}
      <div className="ml-auto flex items-center pt-[6px] text-white">
        <svg width="17" height="11" viewBox="0 0 17 11"><path d="M1 10l7.500-8L16 10" stroke="#fff" strokeWidth="1.500" fill="none" /></svg>
        <div className="ml-[14px] flex gap-[13.900px] pt-[4px]">
          {BIRDS.map((c, i) => (
            <svg key={i} width="16" height="14" viewBox="0 0 16 14">
              <g transform={i < 5 || i === 11 ? undefined : 'translate(16 0) scale(-1 1)'}>
                <path d="M0 13l5-4c0-6 3-9 6-8 4 1 4 4 3 6l1 6z" fill={c} />
                <path d="M9 7c0-3 3-4 3-1v3" stroke="#444" strokeWidth="1.100" fill="none" />
              </g>
            </svg>
          ))}
        </div>
        <svg width="21" height="16" viewBox="0 0 21 16" className="ml-[13px]" fill="none" stroke="#fff" strokeWidth="1.400"><path d="M7 3h11v10H4V9M19.500 6v4M1 1v3h4V1M3 4v4" /><path d="M7 6h5v5H7z" fill="#fff" /></svg>
        <svg width="17" height="17" viewBox="0 0 17 17" className="ml-[12px]" fill="none" stroke="#ddd" strokeWidth="1.400"><path d="M1 16C1 8 8 1 16 1M5 16c0-6 5-11 11-11M9 16c0-4 3-7 7-7" /><circle cx="14.500" cy="14.500" r="1.500" fill="#fff" /></svg>
        <svg width="18" height="18" viewBox="0 0 18 18" className="ml-[10px]"><circle cx="9" cy="9" r="9" fill="#9aa0a3" /><path d="M5 5l8 8M13 5l-8 8" stroke="#1d2427" strokeWidth="2" /></svg>
        <div className="ml-[11px] -mt-[5px] w-[78px] text-center text-[14.700px] leading-[23px] tracking-[-0.4px] font-['Open_Sans',sans-serif]">
          <div>0:49</div>
          <div>2022/03/10</div>
        </div>
        <svg width="21" height="21" viewBox="0 0 21 21" className="ml-[22px] mr-[27px] -mt-[3px]"><path d="M1 1h19v15h-6l-3.500 4L7 16H1z" fill="none" stroke="#fff" strokeWidth="1.400" /></svg>
      </div>
    </div>
  );
}

export default function App() {
  return (
    <div className="w-[1916px] h-[1076px] flex flex-col overflow-hidden bg-white">
      <TitleBar />
      <TabBar />
      <Ribbon />
      <Viewport />
      <Timeline />
      <Taskbar />
    </div>
  );
}
